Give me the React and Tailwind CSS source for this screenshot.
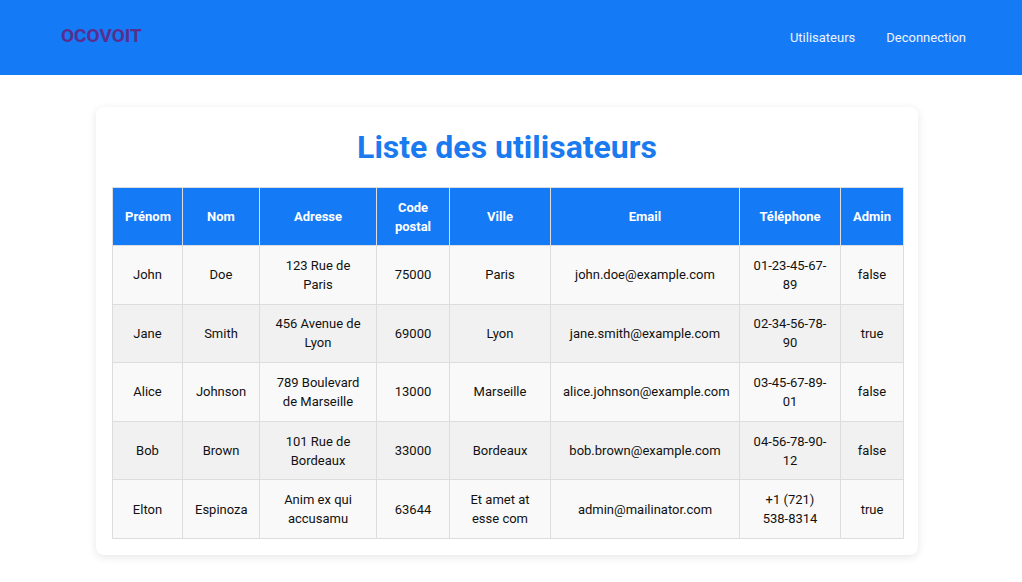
import React from 'react';

// données utilisateurs
const USERS = [
  { prenom: 'John', nom: 'Doe', adresse: '123 Rue de Paris', cp: '75000', ville: 'Paris', email: 'john.doe@example.com', tel: '01-23-45-67-89', admin: 'false' },
  { prenom: 'Jane', nom: 'Smith', adresse: '456 Avenue de Lyon', cp: '69000', ville: 'Lyon', email: 'jane.smith@example.com', tel: '02-34-56-78-90', admin: 'true' },
  { prenom: 'Alice', nom: 'Johnson', adresse: '789 Boulevard de Marseille', cp: '13000', ville: 'Marseille', email: 'alice.johnson@example.com', tel: '03-45-67-89-01', admin: 'false' },
  { prenom: 'Bob', nom: 'Brown', adresse: '101 Rue de Bordeaux', cp: '33000', ville: 'Bordeaux', email: 'bob.brown@example.com', tel: '04-56-78-90-12', admin: 'false' },
  { prenom: 'Elton', nom: 'Espinoza', adresse: 'Anim ex qui accusamu', cp: '63644', ville: 'Et amet at esse com', email: 'admin@mailinator.com', tel: '+1 (721) 538-8314', admin: 'true' }
];

function App() {
  return (
    <div className="min-h-screen bg-white font-['Roboto',sans-serif]">
      {/* Header */}
      <header className="h-[75px] bg-[#157af6] flex items-center justify-between pl-[61px] pr-[56px]">
        <div className="text-[19px] font-bold text-[#5b2d8e] leading-none -mt-[4px]">OCOVOIT</div>
        <nav className="flex gap-[31px] text-[13px] text-[#eef4ff]">
          <a href="#">Utilisateurs</a>
          <a href="#">Deconnection</a>
        </nav>
      </header>

      {/* Contenu */}
      <main className="pt-[32px] pb-8">
        <div className="w-[822px] ml-[96px] bg-white rounded-lg shadow-[0_2px_8px_rgba(0,0,0,0.1)] p-4">
          <h1 className="text-[32px] leading-[36px] font-bold text-[#1a7af0] text-center mt-[6px] mb-[22px]">
            Liste des utilisateurs
          </h1>
          <table className="w-[791px] table-fixed border-collapse text-[13px] leading-[19px] text-[#111] text-center">
            <thead>
              <tr className="bg-[#157af6] text-white font-bold h-[58px]">
                <th className="w-[70px] border border-[#ddd] px-3">Prénom</th>
                <th className="w-[77px] border border-[#ddd] px-3">Nom</th>
                <th className="w-[117px] border border-[#ddd] px-3">Adresse</th>
                <th className="w-[73px] border border-[#ddd] px-3">Code postal</th>
                <th className="w-[101px] border border-[#ddd] px-3">Ville</th>
                <th className="w-[189px] border border-[#ddd] px-3">Email</th>
                <th className="w-[101px] border border-[#ddd] px-3">Téléphone</th>
                <th className="w-[63px] border border-[#ddd] px-3">Admin</th>
              </tr>
            </thead>
            <tbody>
              {USERS.map((u, i) => (
                <tr key={i} className={`h-[58.6px] ${i % 2 === 0 ? 'bg-[#f9f9f9]' : 'bg-[#f1f1f1]'}`}>
                  <td className="border border-[#ddd] px-3">{u.prenom}</td>
                  <td className="border border-[#ddd] px-3">{u.nom}</td>
                  <td className="border border-[#ddd] px-3">{u.adresse}</td>
                  <td className="border border-[#ddd] px-3">{u.cp}</td>
                  <td className="border border-[#ddd] px-3">{u.ville}</td>
                  <td className="border border-[#ddd] px-3">{u.email}</td>
                  <td className="border border-[#ddd] px-3">{u.tel}</td>
                  <td className="border border-[#ddd] px-3">{u.admin}</td>
                </tr>
              ))}
            </tbody>
          </table>
        </div>
      </main>
    </div>
  );
}

export default App;
